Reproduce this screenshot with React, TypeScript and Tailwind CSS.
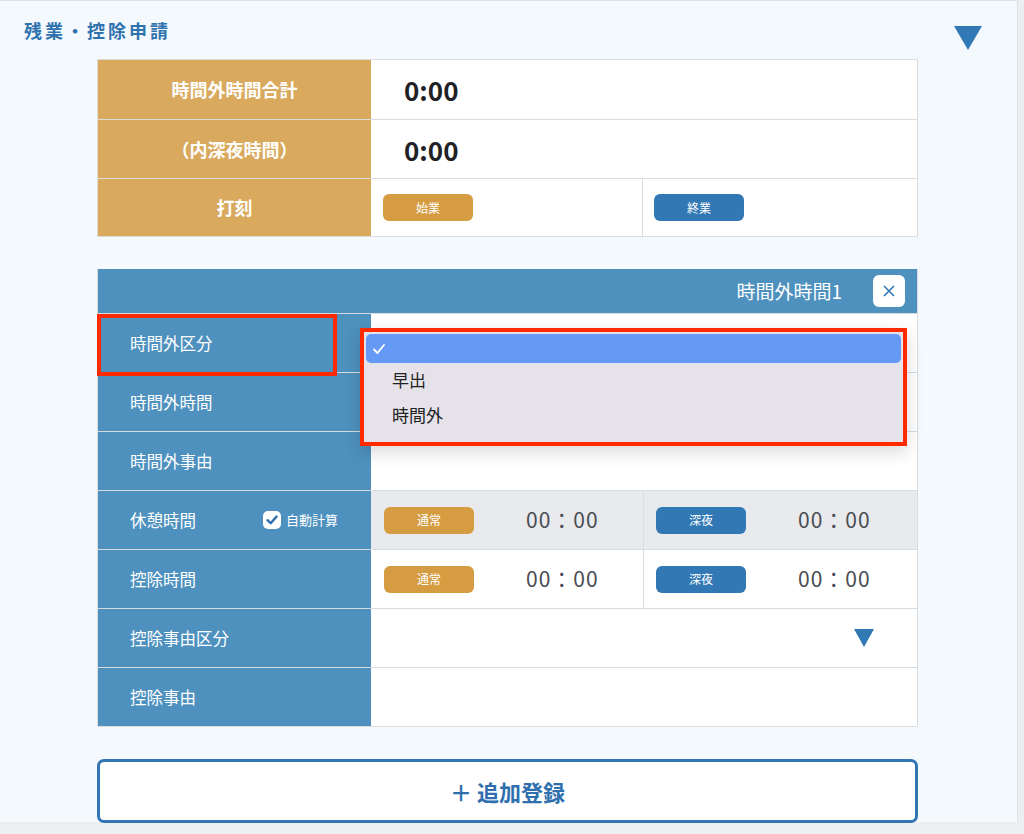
import React from "react";

const font = { fontFamily: '"Noto Sans CJK JP", "Noto Sans", sans-serif' };

const Pill = ({ label, color }: { label: string; color: "gold" | "blue" }) => (
  <span
    className={`inline-flex items-center justify-center w-[90px] h-[27px] rounded-md text-[12px] text-white ${
      color === "gold" ? "bg-[#d59c42]" : "bg-[#3178b4]"
    }`}
  >
    {label}
  </span>
);

const Clock = () => (
  <span className="ml-[52px] text-[21px] text-[#4a4d52] tracking-[1px]">00：00</span>
);

const BlueRow = ({
  label,
  children,
  gray,
  extra,
}: {
  label: string;
  children?: React.ReactNode;
  gray?: boolean;
  extra?: React.ReactNode;
}) => (
  <div className="flex h-[59px] border-t border-[#d7dbe0]">
    <div className="w-[273px] shrink-0 bg-[#4e91be] flex items-center pl-[32px] pr-4 text-white text-[16.5px]">
      <span>{label}</span>
      {extra}
    </div>
    <div className={`flex-1 flex ${gray ? "bg-[#e9eaee]" : "bg-white"}`}>{children}</div>
  </div>
);

const TimePair = () => (
  <>
    <div className="flex-1 flex items-center pl-[13px]">
      <Pill label="通常" color="gold" />
      <Clock />
    </div>
    <div className="w-[274px] border-l border-[#d9dce0] flex items-center pl-[12px]">
      <Pill label="深夜" color="blue" />
      <Clock />
    </div>
  </>
);

export default function App() {
  return (
    <div style={font} className="w-[1024px] h-[834px] overflow-hidden bg-[#eceef0]">
      <div className="w-[1018px] h-[822px] bg-[#f4f9fe] border-t border-r border-[#dfe2e5] relative">
        <div className="flex items-center justify-between pl-6 pr-[34px] pt-[18px] h-[58px]">
          <h1 className="text-[18px] font-bold tracking-[3px] text-[#2f72ae] -mt-[18px]">残業・控除申請</h1>
          <svg width="30" height="26" viewBox="0 0 30 26" className="mt-[-2px]">
            <path d="M1 1 L29 1 L15 25 Z" fill="#3178b5" />
          </svg>
        </div>

        <div className="ml-[97px] w-[821px] border border-[#dcdcdc]">
          <div className="flex h-[59px]">
            <div className="w-[273px] bg-[#d9aa5e] flex items-center justify-center text-white text-[18px] font-bold">
              時間外時間合計
            </div>
            <div className="flex-1 bg-white flex items-center pl-[33px] text-[26px] font-bold text-[#1e2125]">0:00</div>
          </div>
          <div className="flex h-[59px] border-t border-[#dcdcdc]">
            <div className="w-[273px] bg-[#d9aa5e] flex items-center justify-center text-white text-[18px] font-bold">
              （内深夜時間）
            </div>
            <div className="flex-1 bg-white flex items-center pl-[33px] text-[26px] font-bold text-[#1e2125]">0:00</div>
          </div>
          <div className="flex h-[58px] border-t border-[#dcdcdc]">
            <div className="w-[273px] bg-[#d9aa5e] flex items-center justify-center text-white text-[18px] font-bold">
              打刻
            </div>
            <div className="flex-1 bg-white flex items-center pl-[12px] border-r border-[#dcdcdc]">
              <Pill label="始業" color="gold" />
            </div>
            <div className="w-[274px] bg-white flex items-center pl-[11px]">
              <Pill label="終業" color="blue" />
            </div>
          </div>
        </div>

        <div className="relative ml-[97px] mt-[32px] w-[821px] border border-[#dcdcdc] border-t-0">
          <div className="h-[44px] bg-[#4e91be] flex items-center justify-end pr-[12px]">
            <span className="text-white text-[19px] mr-[31px]">時間外時間1</span>
            <span className="w-[32px] h-[32px] bg-white rounded-md flex items-center justify-center">
              <svg width="16" height="16" viewBox="0 0 16 16">
                <path d="M3 3 L13 13 M13 3 L3 13" stroke="#3178b5" strokeWidth="1.6" />
              </svg>
            </span>
          </div>
          <BlueRow label="時間外区分" />
          <BlueRow label="時間外時間" />
          <BlueRow label="時間外事由" />
          <BlueRow
            label="休憩時間"
            gray
            extra={
              <span className="ml-auto mr-[17px] flex items-center text-[13px]">
                <span className="w-[18px] h-[18px] bg-white rounded-[5px] flex items-center justify-center mr-[5px]">
                  <svg width="14" height="14" viewBox="0 0 14 14">
                    <path d="M2.5 7.2 L5.7 10.2 L11.5 3.6" stroke="#2f6fae" strokeWidth="2.4" fill="none" strokeLinecap="round" strokeLinejoin="round" />
                  </svg>
                </span>
                自動計算
              </span>
            }
          >
            <TimePair />
          </BlueRow>
          <BlueRow label="控除時間">
            <TimePair />
          </BlueRow>
          <BlueRow label="控除事由区分">
            <div className="flex-1 flex items-center justify-end pr-[42px]">
              <svg width="22" height="20" viewBox="0 0 22 20">
                <path d="M1 1 L21 1 L11 19 Z" fill="#3178b5" />
              </svg>
            </div>
          </BlueRow>
          <BlueRow label="控除事由" />

          <div className="absolute left-[-1px] top-[45px] w-[240px] h-[62px] border-[4px] border-[#ff2a00]" />

          <div className="absolute left-[262px] top-[59px] w-[547px] h-[118px] border-[4px] border-[#ff2a00] bg-[#e6e2e9] shadow-[0_6px_16px_rgba(0,0,0,0.15)] pt-[2px] px-[2px]">
            <div className="h-[29px] rounded-[5px] bg-[#6499f6] flex items-center pl-[6px]">
              <svg width="14" height="14" viewBox="0 0 14 14">
                <path d="M2 7.5 L5.5 11 L12 3" stroke="white" strokeWidth="1.8" fill="none" strokeLinecap="round" strokeLinejoin="round" />
              </svg>
            </div>
            <div className="pl-[26px] text-[17px] text-[#222] leading-[35px] -mt-[1px]">
              <div>早出</div>
              <div>時間外</div>
            </div>
          </div>
        </div>

        <button className="ml-[97px] mt-[32px] w-[821px] h-[64px] rounded-[7px] border-[3px] border-[#3276b3] bg-white flex items-center justify-center text-[22px] font-bold text-[#2f6fae]">
          ＋ 追加登録
        </button>
      </div>
    </div>
  );
}
